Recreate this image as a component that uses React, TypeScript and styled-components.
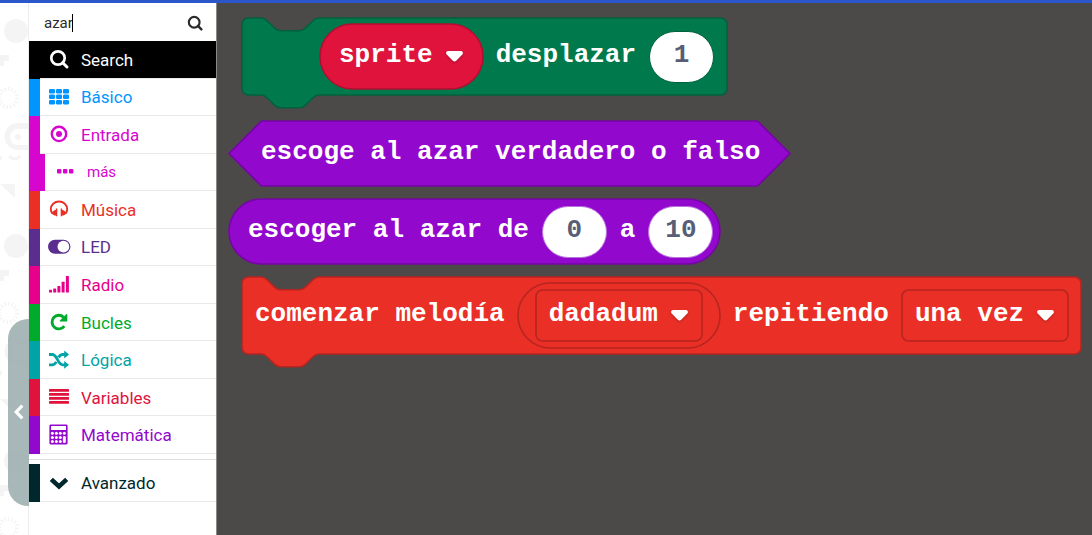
import React, { useLayoutEffect, useRef, useState } from 'react';
import styled, { createGlobalStyle } from 'styled-components';

const GlobalStyle = createGlobalStyle`
  *, *::before, *::after { box-sizing: border-box; }
  body {
    margin: 0;
    background: #ffffff;
    font-family: Roboto, "Liberation Sans", sans-serif;
  }
  button, input, select { font: inherit; color: inherit; }
`;

const Page = styled.div`
  display: flex;
  flex-direction: column;
  min-height: 100vh;
`;

const TopBar = styled.header`
  height: 3px;
  background: #2b57cb;
`;

const Body = styled.div`
  flex: 1;
  display: flex;
`;

/* ---------- simulator edge ---------- */

const SimulatorEdge = styled.aside`
  position: relative;
  width: 28px;
  flex-shrink: 0;
  background: #ffffff;
`;

const Backdrop = styled.svg`
  position: absolute;
  inset: 0;
  width: 100%;
  height: 100%;
`;

const CollapseButton = styled.button`
  position: absolute;
  right: -1px;
  bottom: 29px;
  z-index: 1;
  display: flex;
  align-items: center;
  justify-content: center;
  width: 21px;
  height: 187px;
  padding: 0 0 1px;
  border: 0;
  border-radius: 20px 0 0 20px;
  background: rgba(158, 175, 175, 0.9);
  color: #ffffff;
`;

/* ---------- toolbox ---------- */

const Toolbox = styled.nav`
  width: 189px;
  flex-shrink: 0;
  background: #ffffff;
  border-left: 1px solid #ececec;
  border-right: 1px solid #8a8989;
`;

const SearchBox = styled.div`
  display: flex;
  align-items: center;
  height: 38px;
  padding: 1px 13px 0 15px;
  color: #2b2b2b;
`;

const SearchInput = styled.input`
  field-sizing: content;
  padding: 0;
  border: 0;
  outline: 0;
  background: none;
  font-size: 15px;
  line-height: 20px;
`;

const Caret = styled.span`
  width: 1px;
  height: 18px;
  margin-left: -1px;
  background: #000000;
`;

const SearchButton = styled.button`
  display: flex;
  margin-left: auto;
  padding: 0;
  border: 0;
  background: none;
`;

const CategoryList = styled.ul`
  display: grid;
  grid-auto-rows: 1fr;
  min-height: 413px;
  margin: 0;
  padding: 0;
  list-style: none;
`;

const AdvancedSection = styled.div`
  display: grid;
  grid-auto-rows: 38px;
  margin-top: 5px;
  padding-top: 4px;
  border-top: 1px solid #dedede;
`;

const CategoryItem = styled.li`
  display: grid;
`;

const CategoryButton = styled.button<{ $color: string; $nested?: boolean; $active?: boolean }>`
  display: flex;
  width: 100%;
  padding: 0;
  border: 0;
  border-left: ${p => (p.$nested ? 16 : 11)}px solid ${p => p.$color};
  background: ${p => (p.$active ? p.$color : '#ffffff')};
  color: ${p => (p.$active ? '#ffffff' : p.$color)};
  font-size: ${p => (p.$nested ? 15 : 17)}px;
  line-height: 20px;
  text-align: left;
`;

const CategoryContent = styled.span<{ $nested?: boolean }>`
  flex: 1;
  align-self: stretch;
  display: flex;
  align-items: center;
  gap: 12px;
  padding-left: ${p => (p.$nested ? 10 : 9)}px;
  border-bottom: 1px solid #e9e9e9;
`;

const CategoryName = styled.span`
  padding-top: 1px;
`;

const Icon = ({ children, size = 20 }: { children: React.ReactNode; size?: number }) => (
  <svg width={size} height={size} viewBox="0 0 20 20" overflow="visible" fill="currentColor" aria-hidden="true">
    {children}
  </svg>
);

const SearchIcon = ({ size }: { size?: number }) => (
  <Icon size={size}>
    <g fill="none" stroke="currentColor">
      <circle cx="9" cy="9" r="6.700" strokeWidth="2.700" />
      <path d="M13.700 13.700 18 18" strokeWidth="3" strokeLinecap="round" />
    </g>
  </Icon>
);

const GridIcon = () => (
  <Icon>
    {[2, 7.500, 13].map(y =>
      [0, 7, 14].map(x => <rect key={`${x}-${y}`} x={x} y={y} width="6" height="4.400" rx="1.200" />),
    )}
  </Icon>
);

const TargetIcon = () => (
  <Icon>
    <circle cx="10" cy="9.900" r="7.200" fill="none" stroke="currentColor" strokeWidth="2.400" />
    <circle cx="10" cy="9.900" r="3" />
  </Icon>
);

const DotsIcon = () => (
  <Icon>
    {[2, 8, 14].map(x => <rect key={x} x={x} y="7" width="4.400" height="4.400" rx="1" />)}
  </Icon>
);

const HeadphonesIcon = () => (
  <Icon>
    <path d="M3.600 14.700C2.300 13.400 1.800 12 1.800 10.200 1.800 5.800 5.400 2.500 10 2.500s8.200 3.300 8.200 7.700c0 1.800-.5 3.200-1.800 4.500" fill="none" stroke="currentColor" strokeWidth="1.900" />
    <path d="M8.300 9.600v7.600H6.900v-.7c-1.600-.1-3.200-.9-4.300-2.100 1-2 2.500-3.300 4.300-3.600V9.600zM11.700 9.600v7.600h1.400v-.7c1.600-.1 3.200-.9 4.300-2.100-1-2-2.500-3.300-4.300-3.600V9.600z" />
  </Icon>
);

const ToggleIcon = () => (
  <Icon>
    <rect x="-1" y="2.700" width="22.400" height="14" rx="7" />
    <circle cx="14.400" cy="9.700" r="5.900" fill="#ffffff" />
  </Icon>
);

const SignalIcon = () => (
  <Icon>
    <rect x="0" y="14.800" width="3" height="2.700" rx=".5" />
    <rect x="4.200" y="13.600" width="3" height="3.900" rx=".5" />
    <rect x="8.400" y="11" width="3" height="6.500" rx=".5" />
    <rect x="12.600" y="6.700" width="3" height="10.800" rx=".5" />
    <rect x="16.900" y="1" width="3" height="16.500" rx=".5" />
  </Icon>
);

const RepeatIcon = () => (
  <Icon>
    <path d="M15.300 14.200A6.800 6.800 0 1 1 14.600 5.200" fill="none" stroke="currentColor" strokeWidth="2.900" />
    <path d="M18.300 2.700v6.200c0 .4-.3.700-.7.700h-6.200c-.6 0-.9-.7-.5-1.100l6.300-6.300c.4-.4 1.100-.1 1.100.5z" />
  </Icon>
);

const ShuffleIcon = () => (
  <Icon>
    <path d="M0 4.500h3.200C8.500 4.500 8.500 14.800 13.800 14.800H16M0 14.800h3.200c2 0 3.200-1.300 4.100-2.900M9.600 7.500c.9-1.700 2.100-3 4.200-3H16" fill="none" stroke="currentColor" strokeWidth="2.800" />
    <path d="M15.200.6 20 4.500l-4.800 3.900zM15.200 10.900 20 14.800l-4.800 3.900z" />
  </Icon>
);

const LinesIcon = () => (
  <Icon>
    {[2, 6, 10, 14].map(y => <rect key={y} x="0" y={y} width="20" height="2.800" rx=".5" />)}
  </Icon>
);

const CalculatorIcon = () => (
  <Icon>
    <path
      fillRule="evenodd"
      d="M1.800-.5h15.400c.8 0 1.400.6 1.400 1.400v17.200c0 .8-.6 1.400-1.400 1.400H1.800c-.8 0-1.400-.6-1.400-1.400V.9c0-.8.6-1.400 1.400-1.400zM2 .9v4.200h15V.9z"
    />
    <g fill="#ffffff">
      {[7, 11.200, 15.200].map(y => [2.200, 6.200, 10.100].map(x => <circle key={`${x}-${y}`} cx={x + 1.2} cy={y + 1.2} r="1.500" />))}
      <circle cx="15.300" cy="8.200" r="1.500" />
      <rect x="13.900" y="11" width="2.900" height="7" rx="1.300" />
    </g>
  </Icon>
);

const ChevronDownIcon = () => (
  <Icon>
    <path d="M2.300 6.400 10 13.400 17.700 6.400" fill="none" stroke="currentColor" strokeWidth="4.600" />
  </Icon>
);

interface Category {
  name: string;
  color: string;
  icon: React.ReactNode;
  nested?: boolean;
  active?: boolean;
}

const categories: Category[] = [
  { name: 'Search', color: '#000000', icon: <SearchIcon />, active: true },
  { name: 'Básico', color: '#0095ff', icon: <GridIcon /> },
  { name: 'Entrada', color: '#d606ce', icon: <TargetIcon /> },
  { name: 'más', color: '#d606ce', icon: <DotsIcon />, nested: true },
  { name: 'Música', color: '#ea2f27', icon: <HeadphonesIcon /> },
  { name: 'LED', color: '#5b2d8e', icon: <ToggleIcon /> },
  { name: 'Radio', color: '#e7008a', icon: <SignalIcon /> },
  { name: 'Bucles', color: '#00ab2c', icon: <RepeatIcon /> },
  { name: 'Lógica', color: '#00a4a6', icon: <ShuffleIcon /> },
  { name: 'Variables', color: '#df133c', icon: <LinesIcon /> },
  { name: 'Matemática', color: '#9308cd', icon: <CalculatorIcon /> },
];

const advanced: Category = { name: 'Avanzado', color: '#00272b', icon: <ChevronDownIcon /> };

const CategoryRow = ({ name, color, icon, nested, active }: Category) => (
  <CategoryButton type="button" $color={color} $nested={nested} $active={active}>
    <CategoryContent $nested={nested}>
      {icon}
      <CategoryName>{name}</CategoryName>
    </CategoryContent>
  </CategoryButton>
);

/* ---------- blocks ---------- */

const Flyout = styled.main`
  flex: 1;
  min-width: 0;
  display: flex;
  flex-direction: column;
  align-items: flex-start;
  gap: 13px;
  padding: 15px 10px 13px 12px;
  background: #4c4949;
  color: #ffffff;
  font-family: "Liberation Mono", monospace;
  font-size: 26px;
  font-weight: 700;
  line-height: 30px;
  white-space: pre;
`;

type Shape = 'stack' | 'hexagon' | 'round' | 'box';

const BlockRow = styled.div<{ $shape: Shape; $pad: string }>`
  position: relative;
  isolation: isolate;
  flex-shrink: 0;
  display: flex;
  align-items: center;
  gap: 13px;
  min-height: ${p => (p.$shape === 'stack' ? 77 : p.$shape === 'box' ? 51 : 65)}px;
  padding: ${p => p.$pad};
`;

const StackSlot = styled.div`
  padding: 0 0 13px 13px;
`;

const OutlineSvg = styled.svg`
  position: absolute;
  inset: 0;
  z-index: -1;
  width: 100%;
  height: 100%;
  overflow: visible;
`;

const notchRight = 'c3.200 0 4.800 1.600 6.400 3.200l6.400 6.400c1.600 1.600 3.200 3.200 6.400 3.200h19.200c3.200 0 4.800-1.600 6.400-3.200l6.400-6.400c1.600-1.600 3.200-3.200 6.400-3.200';
const notchLeft = 'c-3.200 0-4.800 1.600-6.400 3.200l-6.400 6.400c-1.600 1.600-3.200 3.200-6.400 3.200h-19.200c-3.200 0-4.800-1.600-6.400-3.200l-6.400-6.400c-1.600-1.600-3.200-3.200-6.400-3.200';

const outlinePath = (shape: Shape, w: number, h: number) => {
  const m = h / 2;
  if (shape === 'hexagon') return `M${m} 0H${w - m}L${w} ${m}L${w - m} ${h}H${m}L0 ${m}Z`;
  if (shape === 'round') return `M${m} 0H${w - m}A${m} ${m} 0 0 1 ${w - m} ${h}H${m}A${m} ${m} 0 0 1 ${m} 0Z`;
  const r = 6.4;
  const notched = shape === 'stack';
  return [
    `M0 ${r}A${r} ${r} 0 0 1 ${r} 0`,
    notched ? `H19.200${notchRight}` : '',
    `H${w - r}A${r} ${r} 0 0 1 ${w} ${r}V${h - r}A${r} ${r} 0 0 1 ${w - r} ${h}`,
    notched ? `H76.800${notchLeft}` : '',
    `H${r}A${r} ${r} 0 0 1 0 ${h - r}Z`,
  ].join('');
};

/* Draws a block's outline around whatever size its content takes. */
const Outline = ({ shape, fill, stroke }: { shape: Shape; fill: string; stroke: string }) => {
  const ref = useRef<SVGSVGElement>(null);
  const [size, setSize] = useState({ w: 100, h: 64 });
  useLayoutEffect(() => {
    const host = ref.current?.parentElement;
    if (!host) return;
    const measure = () => setSize({ w: host.offsetWidth, h: host.offsetHeight });
    measure();
    const observer = new ResizeObserver(measure);
    observer.observe(host);
    return () => observer.disconnect();
  }, []);
  return (
    <OutlineSvg ref={ref} aria-hidden="true">
      <path d={outlinePath(shape, size.w, size.h)} fill={fill} stroke={stroke} strokeWidth="1.600" />
    </OutlineSvg>
  );
};

interface BlockProps {
  shape: Shape;
  fill: string;
  stroke: string;
  pad: string;
  children: React.ReactNode;
}

const Block = ({ shape, fill, stroke, pad, children }: BlockProps) => (
  <BlockRow $shape={shape} $pad={pad}>
    <Outline shape={shape} fill={fill} stroke={stroke} />
    {children}
  </BlockRow>
);

const BlockText = styled.span`
  padding-bottom: 4px;
`;

const NumberInput = styled.input<{ $edge: string }>`
  width: 65px;
  height: 52px;
  padding: 0 0 4px;
  border: 1px solid ${p => p.$edge};
  border-radius: 26px;
  outline: 0;
  background: #ffffff;
  color: #575e75;
  text-align: center;
`;

const BlockSelect = styled.select`
  appearance: none;
  field-sizing: content;
  padding: 0 0 4px;
  border: 0;
  outline: 0;
  background: none;
`;

const ArrowSvg = styled.svg`
  filter: drop-shadow(0 1px 1px rgba(0, 0, 0, 0.25));
`;

const Dropdown = ({ value, label }: { value: string; label: string }) => (
  <>
    <BlockSelect aria-label={label} defaultValue={value}>
      <option value={value}>{value}</option>
    </BlockSelect>
    <ArrowSvg width="17" height="11" viewBox="0 0 17 11" aria-hidden="true">
      <path d="M2.200 0h12.600c1.900 0 2.800 2.100 1.500 3.500L10.200 9.800c-.9.900-2.500.9-3.400 0L.7 3.500C-.6 2.100.3 0 2.200 0z" fill="#ffffff" />
    </ArrowSvg>
  </>
);

const green = { fill: '#007a4c', stroke: '#00623d' };
const crimson = { fill: '#df133c', stroke: '#b20f30' };
const purple = { fill: '#9308cd', stroke: '#7606a4' };
const red = { fill: '#ea2f27', stroke: '#b62520' };

export default function App() {
  const [query, setQuery] = useState('azar');
  return (
    <Page>
      <GlobalStyle />
      <TopBar />
      <Body>
        <SimulatorEdge>
          <Backdrop aria-hidden="true">
            <defs>
              <pattern id="doodles" width="60" height="215" patternUnits="userSpaceOnUse">
                <g fill="#f4f4f4">
                  <circle cx="16" cy="28" r="12" />
                  <path d="M0 52h9v6H4v5H0z" />
                  <path d="M0 181h15v14z" />
                  <path fillRule="evenodd" d="M18 120h22v27H18a13.500 13.500 0 0 1 0-27zm0 6a8 8 0 0 0 0 16h22v-16z" />
                  <circle cx="18" cy="134" r="3" />
                </g>
                <g fill="none" stroke="#f4f4f4">
                  <circle cx="8" cy="95" r="9" strokeWidth="4" strokeDasharray="1.500 2" />
                  <path d="M9 153q6 6 11 0M-4 157q4 2 5-4" strokeWidth="3" />
                </g>
              </pattern>
            </defs>
            <rect width="100%" height="100%" fill="url(#doodles)" />
          </Backdrop>
          <CollapseButton type="button" aria-label="Mostrar simulador">
            <svg width="10" height="16" viewBox="0 0 10 16" aria-hidden="true">
              <path d="M8.300 1.700 2.200 8l6.100 6.300" fill="none" stroke="currentColor" strokeWidth="3.200" />
            </svg>
          </CollapseButton>
        </SimulatorEdge>

        <Toolbox>
          <SearchBox>
            <SearchInput aria-label="Buscar" value={query} onChange={e => setQuery(e.target.value)} />
            <Caret />
            <SearchButton type="button" aria-label="Buscar">
              <SearchIcon size={16} />
            </SearchButton>
          </SearchBox>
          <CategoryList>
            {categories.map(category => (
              <CategoryItem key={category.name}>
                <CategoryRow {...category} />
              </CategoryItem>
            ))}
          </CategoryList>
          <AdvancedSection>
            <CategoryRow {...advanced} />
          </AdvancedSection>
        </Toolbox>

        <Flyout>
          <StackSlot>
            <Block shape="stack" {...green} pad="0 13px 0 78px">
              <Block shape="round" {...crimson} pad="0 20px 0 19px">
                <Dropdown value="sprite" label="Variable" />
              </Block>
              <BlockText>desplazar</BlockText>
              <NumberInput $edge={green.stroke} aria-label="Desplazamiento" defaultValue="1" />
            </Block>
          </StackSlot>
          <Block shape="hexagon" {...purple} pad="0 30px 0 32px">
            <BlockText>escoge al azar verdadero o falso</BlockText>
          </Block>
          <Block shape="round" {...purple} pad="0 7px 0 19px">
            <BlockText>escoger al azar de</BlockText>
            <NumberInput $edge="#b872dd" aria-label="Mínimo" defaultValue="0" />
            <BlockText>a</BlockText>
            <NumberInput $edge="#b872dd" aria-label="Máximo" defaultValue="10" />
          </Block>
          <StackSlot>
            <Block shape="stack" {...red} pad="0 13px">
              <BlockText>comenzar melodía</BlockText>
              <Block shape="round" {...red} pad="0 18px">
                <Block shape="box" {...red} pad="0 14px 0 13px">
                  <Dropdown value="dadadum" label="Melodía" />
                </Block>
              </Block>
              <BlockText>repitiendo</BlockText>
              <Block shape="box" {...red} pad="0 14px 0 13px">
                <Dropdown value="una vez" label="Repetición" />
              </Block>
            </Block>
          </StackSlot>
        </Flyout>
      </Body>
    </Page>
  );
}
